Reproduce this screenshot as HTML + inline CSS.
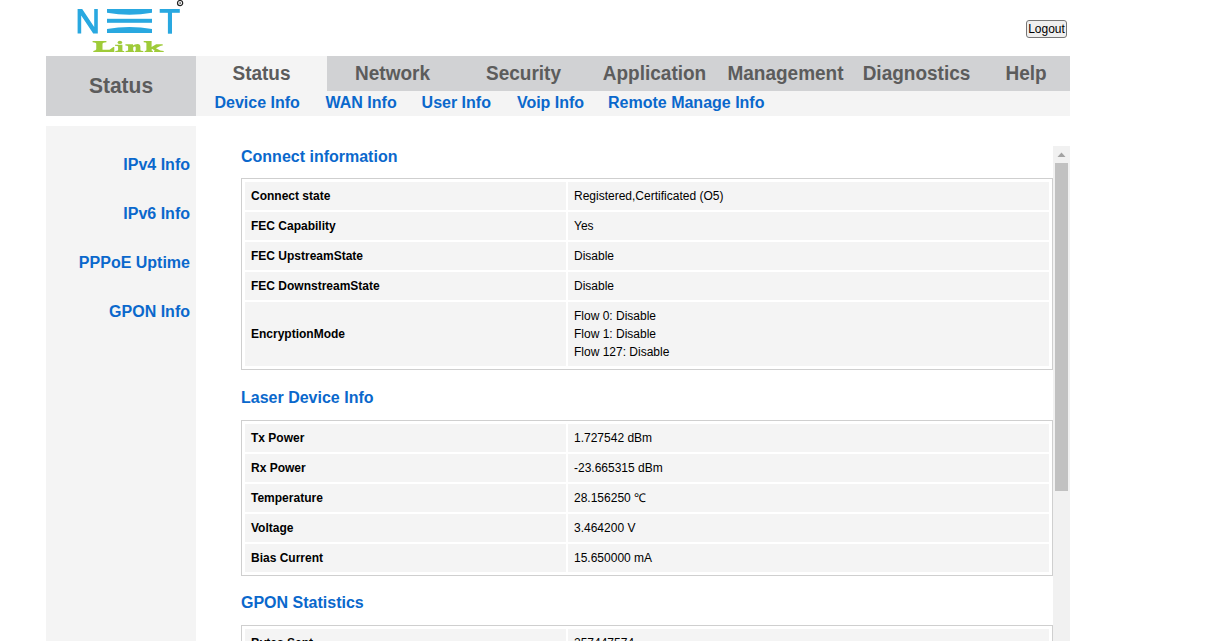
<!DOCTYPE html>
<html><head><meta charset="utf-8">
<style>
*{box-sizing:border-box}
html,body{margin:0;padding:0;background:#fff;width:1216px;height:641px;overflow:hidden;font-family:"Liberation Sans",sans-serif}
.a{position:absolute;white-space:nowrap}
#logout{position:absolute;left:1026px;top:20px;width:41px;height:18px;border:1px solid #767676;border-radius:3px;background:#efefef;font:12px "Liberation Sans",sans-serif;color:#000;line-height:16px;text-align:center;padding:0}
.gray{background:#d1d2d4}
.light{background:#f4f4f4}
.menu{font-weight:bold;font-size:19px;color:#5c5c5c;line-height:22px;top:63px;text-align:center;transform:scaleY(1.08);transform-origin:50% 17px}
.sub{font-weight:bold;font-size:16px;color:#0a68cc;line-height:18px;top:94px}
.side{font-weight:bold;font-size:16px;color:#0a68cc;line-height:18px;right:1026px;text-align:right}
.h{font-weight:bold;font-size:16px;color:#0a68cc;line-height:18px;left:241px}
.tbl{position:absolute;left:241px;width:812px;border:1px solid #cfcfcf}
.row{position:absolute;left:3px;height:28px}
.c1,.c2{position:absolute;top:0;height:100%;background:#f4f4f4;font-size:12px;line-height:18px;padding:5px 6px;color:#000}
.c1{left:0;width:321px;font-weight:bold}
.c2{left:323px;width:481px}
</style></head><body>

<!-- logo -->
<svg class="a" style="left:0;top:0" width="200" height="56" viewBox="0 0 200 56">
  <g fill="#29a8e0">
    <polygon points="77.6,9 82.2,9 94.2,27 94.2,9 97.8,9 97.8,33.6 93.2,33.6 81.2,15.6 81.2,33.6 77.6,33.6"/>
    <path d="M107,9 L152,9 L152,12.8 Q129.5,16.8 107,12.8 Z"/>
    <rect x="107" y="18.8" width="45" height="4"/>
    <path d="M107,29 Q129.5,25 152,29 L152,33 L107,33 Z"/>
    <rect x="159.7" y="9" width="20.1" height="3.8"/>
    <rect x="167.9" y="12" width="4.1" height="21.7"/>
  </g>
  <circle cx="180.1" cy="3.1" r="2.6" fill="none" stroke="#222" stroke-width="1.2"/>
  <circle cx="180.1" cy="3.1" r="0.8" fill="#222"/>
  <g fill="#9fcb39">
    <path d="M92.6,41 L106.4,41 L106.4,42.3 Q102.5,42.6 102.5,44 L102.5,49.7 L109.5,49.7 L113.3,46.9 L114.3,46.9 L114.3,52.1 L93.3,52.1 L93.3,50.9 Q96.25,50.6 96.25,49.2 L96.25,44 Q96.25,42.6 92.6,42.3 Z"/>
    <ellipse cx="119.9" cy="42.4" rx="2.3" ry="1.7"/>
    <path d="M115,44.7 L122.4,44.7 L122.4,50.4 Q122.6,50.9 124.2,51 L124.2,52.1 L115.3,52.1 L115.3,51 Q118.1,50.9 118.1,50 L118.1,46.6 Q118,45.9 115,45.8 Z"/>
    <path d="M125.4,44.2 L133,44.2 L133,45.4 Q134.6,43.9 137.6,43.9 Q140.4,43.9 140.4,46.8 L140.4,50.3 Q140.6,50.9 143.3,51 L143.3,52.1 L134.8,52.1 L134.8,51 Q135.7,50.9 135.7,50.2 L135.7,47.4 Q135.7,46.6 134.9,46.6 Q133.7,46.6 133.2,47.6 L133.2,50.2 Q133.2,50.9 134.1,51 L134.1,52.1 L125.6,52.1 L125.6,51 Q128.1,50.9 128.1,50.2 L128.1,46.4 Q128,45.6 125.4,45.5 Z"/>
    <path d="M143.7,41 L151.6,41 L151.6,46.9 L156.2,44.2 L162.7,44.2 L162.7,45.5 Q160.8,45.7 159.3,46.5 L155.9,48.3 L160.3,50.6 Q161.8,51 163.7,51 L163.7,52.1 L154.1,52.1 L154.1,51 Q155.2,50.9 154.6,50.5 L152.4,49.1 L151.6,49.6 L151.6,50.3 Q151.8,50.9 152.8,51 L152.8,52.1 L144.7,52.1 L144.7,51 Q146.4,50.9 146.4,50.2 L146.4,43.2 Q146.4,42.5 143.7,42.3 Z"/>
  </g>
</svg>

<button id="logout">Logout</button>

<div class="a gray" style="left:46px;top:56px;width:150px;height:60px"></div>
<div class="a" style="left:46px;top:74px;width:150px;text-align:center;font-weight:bold;font-size:21px;line-height:24px;color:#5c5c5c;transform:scaleY(1.07);transform-origin:50% 19px">Status</div>

<div class="a gray" style="left:196px;top:56px;width:874px;height:35px"></div>
<div class="a light" style="left:196px;top:91px;width:874px;height:25px"></div>
<div class="a light" style="left:196px;top:56px;width:131px;height:35px"></div>

<div class="a menu" style="left:196px;width:131px">Status</div>
<div class="a menu" style="left:327px;width:131px">Network</div>
<div class="a menu" style="left:458px;width:131px">Security</div>
<div class="a menu" style="left:589px;width:131px">Application</div>
<div class="a menu" style="left:720px;width:131px">Management</div>
<div class="a menu" style="left:851px;width:131px">Diagnostics</div>
<div class="a menu" style="left:982px;width:88px">Help</div>

<div class="a sub" style="left:214.5px">Device Info</div>
<div class="a sub" style="left:325.6px">WAN Info</div>
<div class="a sub" style="left:421.6px">User Info</div>
<div class="a sub" style="left:516.9px">Voip Info</div>
<div class="a sub" style="left:608px">Remote Manage Info</div>

<div class="a light" style="left:46px;top:126px;width:150px;height:515px"></div>
<div class="a side" style="top:156px">IPv4 Info</div>
<div class="a side" style="top:205px">IPv6 Info</div>
<div class="a side" style="top:254px">PPPoE Uptime</div>
<div class="a side" style="top:303px">GPON Info</div>

<!-- content -->
<div class="a h" style="top:148px">Connect information</div>
<div class="tbl" style="top:178px;height:192px">
  <div class="row" style="top:3px"><div class="c1">Connect state</div><div class="c2">Registered,Certificated (O5)</div></div>
  <div class="row" style="top:33px"><div class="c1">FEC Capability</div><div class="c2">Yes</div></div>
  <div class="row" style="top:63px"><div class="c1">FEC UpstreamState</div><div class="c2">Disable</div></div>
  <div class="row" style="top:93px"><div class="c1">FEC DownstreamState</div><div class="c2">Disable</div></div>
  <div class="row" style="top:123px;height:64px"><div class="c1" style="padding-top:23px">EncryptionMode</div><div class="c2">Flow 0: Disable<br>Flow 1: Disable<br>Flow 127: Disable</div></div>
</div>

<div class="a h" style="top:389px">Laser Device Info</div>
<div class="tbl" style="top:420px;height:156px">
  <div class="row" style="top:3px"><div class="c1">Tx Power</div><div class="c2">1.727542 dBm</div></div>
  <div class="row" style="top:33px"><div class="c1">Rx Power</div><div class="c2">-23.665315 dBm</div></div>
  <div class="row" style="top:63px"><div class="c1">Temperature</div><div class="c2">28.156250 &#8451;</div></div>
  <div class="row" style="top:93px"><div class="c1">Voltage</div><div class="c2">3.464200 V</div></div>
  <div class="row" style="top:123px"><div class="c1">Bias Current</div><div class="c2">15.650000 mA</div></div>
</div>

<div class="a h" style="top:594px">GPON Statistics</div>
<div class="tbl" style="top:625px;height:156px">
  <div class="row" style="top:3px"><div class="c1">Bytes Sent</div><div class="c2">257447574</div></div>
</div>

<!-- scrollbar -->
<div class="a" style="left:1053px;top:146px;width:17px;height:495px;background:#f1f1f1"></div>
<div class="a" style="left:1055px;top:163px;width:13px;height:328px;background:#c1c1c1"></div>
<svg class="a" style="left:1053px;top:146px" width="17" height="17"><polygon points="4.5,11 12.5,11 8.5,6.5" fill="#a3a3a3"/></svg>

</body></html>
